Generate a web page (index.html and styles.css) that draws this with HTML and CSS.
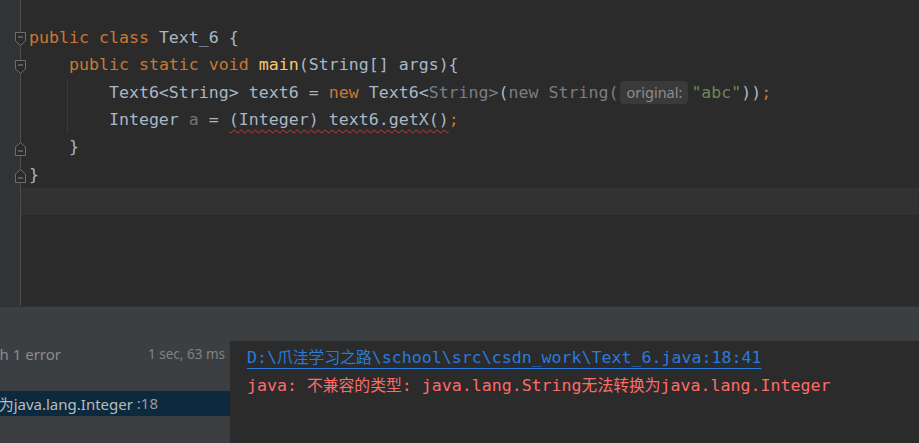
FILE: index.html
```html
<!DOCTYPE html>
<html>

<head>
  <meta charset="UTF-8">
  <meta name="viewport" content="width=device-width, initial-scale=1">
  <title>Text_6.java</title>
  <link rel="stylesheet" href="styles.css">
</head>

<body>
  <div class="editor">
    <div class="line">
      <div class="gutter"><svg class="fold" width="11" height="14" viewBox="0 0 11 14"><path d="M0.5 0.5H10.5V9L5.5 13.5L0.5 9Z"/><line x1="3" y1="5" x2="8" y2="5"/></svg></div>
      <div class="code"><span class="kw">public class</span> Text_6 {</div>
    </div>
    <div class="line">
      <div class="gutter"><svg class="fold" width="11" height="14" viewBox="0 0 11 14"><path d="M0.5 0.5H10.5V9L5.5 13.5L0.5 9Z"/><line x1="3" y1="5" x2="8" y2="5"/></svg></div>
      <div class="code">    <span class="kw">public static void</span> <span class="fn">main</span>(String[] args){</div>
    </div>
    <div class="line">
      <div class="gutter"></div>
      <div class="code guide">        Text6&lt;String&gt; text6 = <span class="kw">new</span> Text6&lt;<span class="dim">String&gt;</span>(<span class="dim">new String(</span><span class="hint">original:</span><span class="str">"abc"</span>))<span class="kw">;</span></div>
    </div>
    <div class="line">
      <div class="gutter"></div>
      <div class="code guide">        Integer <span class="unused">a</span> = <span class="err">(Integer) text6.getX()</span><span class="kw">;</span></div>
    </div>
    <div class="line">
      <div class="gutter"><svg class="fold" width="11" height="14" viewBox="0 0 11 14"><path d="M0.5 13.5H10.5V5L5.5 0.5L0.5 5Z"/><line x1="3" y1="9" x2="8" y2="9"/></svg></div>
      <div class="code">    }</div>
    </div>
    <div class="line">
      <div class="gutter"><svg class="fold" width="11" height="14" viewBox="0 0 11 14"><path d="M0.5 13.5H10.5V5L5.5 0.5L0.5 5Z"/><line x1="3" y1="9" x2="8" y2="9"/></svg></div>
      <div class="code">}</div>
    </div>
    <div class="line current">
      <div class="gutter"></div>
      <div class="code"></div>
    </div>
  </div>

  <div class="panel">
    <div class="tree">
      <div class="tree-row">
        <div class="clip first">Build: failed with 1 error</div>
        <div class="time">1 sec, 63 ms</div>
      </div>
      <div class="tree-row"></div>
      <div class="tree-row selected">
        <div class="clip msg">java: 不兼容的类型: java.lang.String无法转换为java.lang.Integer<span class="pos">&nbsp;:18</span></div>
      </div>
    </div>
    <div class="output">
      <div class="toolbar"></div>
      <div class="console">
        <div class="link">D:\<span class="cjk">爪洼学习之路</span>\school\src\csdn_work\Text_6.java:18:41</div>
        <div class="error">java: <span class="cjk">不兼容的类型</span>: java.lang.String<span class="cjk">无法转换为</span>java.lang.Integer</div>
      </div>
    </div>
  </div>
</body>

</html>
```

FILE: styles.css
```css
body {
  margin: 0;
  width: 919px;
  height: 443px;
  overflow: hidden;
  background-color: #2B2B2B;
}

.editor {
  height: 306px;
  padding-top: 24px;
  box-sizing: border-box;
  overflow: hidden;
  background: linear-gradient(to right, #313335 0, #313335 20px, #4D4D4D 20px, #4D4D4D 21px, #2B2B2B 21px);
  font-family: "DejaVu Sans Mono", "Noto Sans CJK SC", monospace;
  font-size: 16.6px;
  color: #A9B7C6;
}

.line {
  display: flex;
  height: 27.35px;
  line-height: 27.35px;
}

.line.current {
  background: linear-gradient(to right, transparent 21px, #323232 21px);
}

.gutter {
  width: 26px;
  flex-shrink: 0;
  display: flex;
  align-items: center;
  padding-left: 15px;
  box-sizing: border-box;
}

.fold {
  margin-top: 3px;
  display: block;
}

.fold path {
  fill: #2B2B2B;
  stroke: #6E6E6E;
  stroke-width: 1;
}

.fold line {
  stroke: #8A8A8A;
  stroke-width: 1;
}

.code {
  flex: 1;
  padding-left: 3px;
  white-space: pre;
}

.code.guide {
  background: linear-gradient(to right, transparent 41px, #3A3A3A 41px, #3A3A3A 42px, transparent 42px);
}

.kw {
  color: #CC7832;
}

.fn {
  color: #FFC66D;
}

.str {
  color: #6A8759;
}

.dim {
  color: #7A7E85;
}

.unused {
  color: #72737A;
}

.err {
  text-decoration: underline wavy #BC3F3C;
  text-decoration-thickness: 1px;
  text-underline-offset: 4px;
}

.hint {
  display: inline-block;
  margin: 0 3px 0 2px;
  padding: 0 6px;
  line-height: 23px;
  border-radius: 4px;
  background-color: #3A3A3A;
  color: #8C8C8C;
  font-family: "Noto Sans", sans-serif;
  font-size: 14.5px;
}

.panel {
  display: flex;
  height: 137px;
  background-color: #3C3F41;
  border-top: 1px solid #323232;
}

.tree {
  width: 230px;
  padding-top: 34px;
  font-family: "Noto Sans", "Noto Sans CJK SC", sans-serif;
  color: #BBBBBB;
}

.tree-row {
  display: flex;
  align-items: center;
  justify-content: space-between;
  height: 25px;
}

.tree-row.selected {
  background-color: #0D293E;
}

.clip {
  display: flex;
  justify-content: flex-end;
  overflow: hidden;
  white-space: nowrap;
}

.first {
  width: 61px;
  font-size: 15px;
  color: #8C8C8C;
}

.time {
  margin-right: 5px;
  font-size: 13.5px;
  color: #828282;
}

.msg {
  width: 158px;
  font-size: 15px;
}

.pos {
  color: #9A9A9A;
}

.output {
  flex: 1;
  display: flex;
  flex-direction: column;
}

.toolbar {
  height: 34px;
  flex-shrink: 0;
}

.console {
  flex: 1;
  padding: 2px 0 0 17px;
  background-color: #2B2B2B;
  font-family: "DejaVu Sans Mono", "Noto Sans CJK SC", monospace;
  font-size: 16.6px;
  line-height: 27px;
}

.console div {
  white-space: pre;
}

.cjk {
  font-family: "Noto Sans CJK SC", sans-serif;
  font-size: 15.8px;
}

.link {
  color: #287BDE;
  text-decoration: underline;
  text-decoration-skip-ink: none;
  text-underline-offset: 5px;
}

.error {
  color: #FF6B68;
}
```
